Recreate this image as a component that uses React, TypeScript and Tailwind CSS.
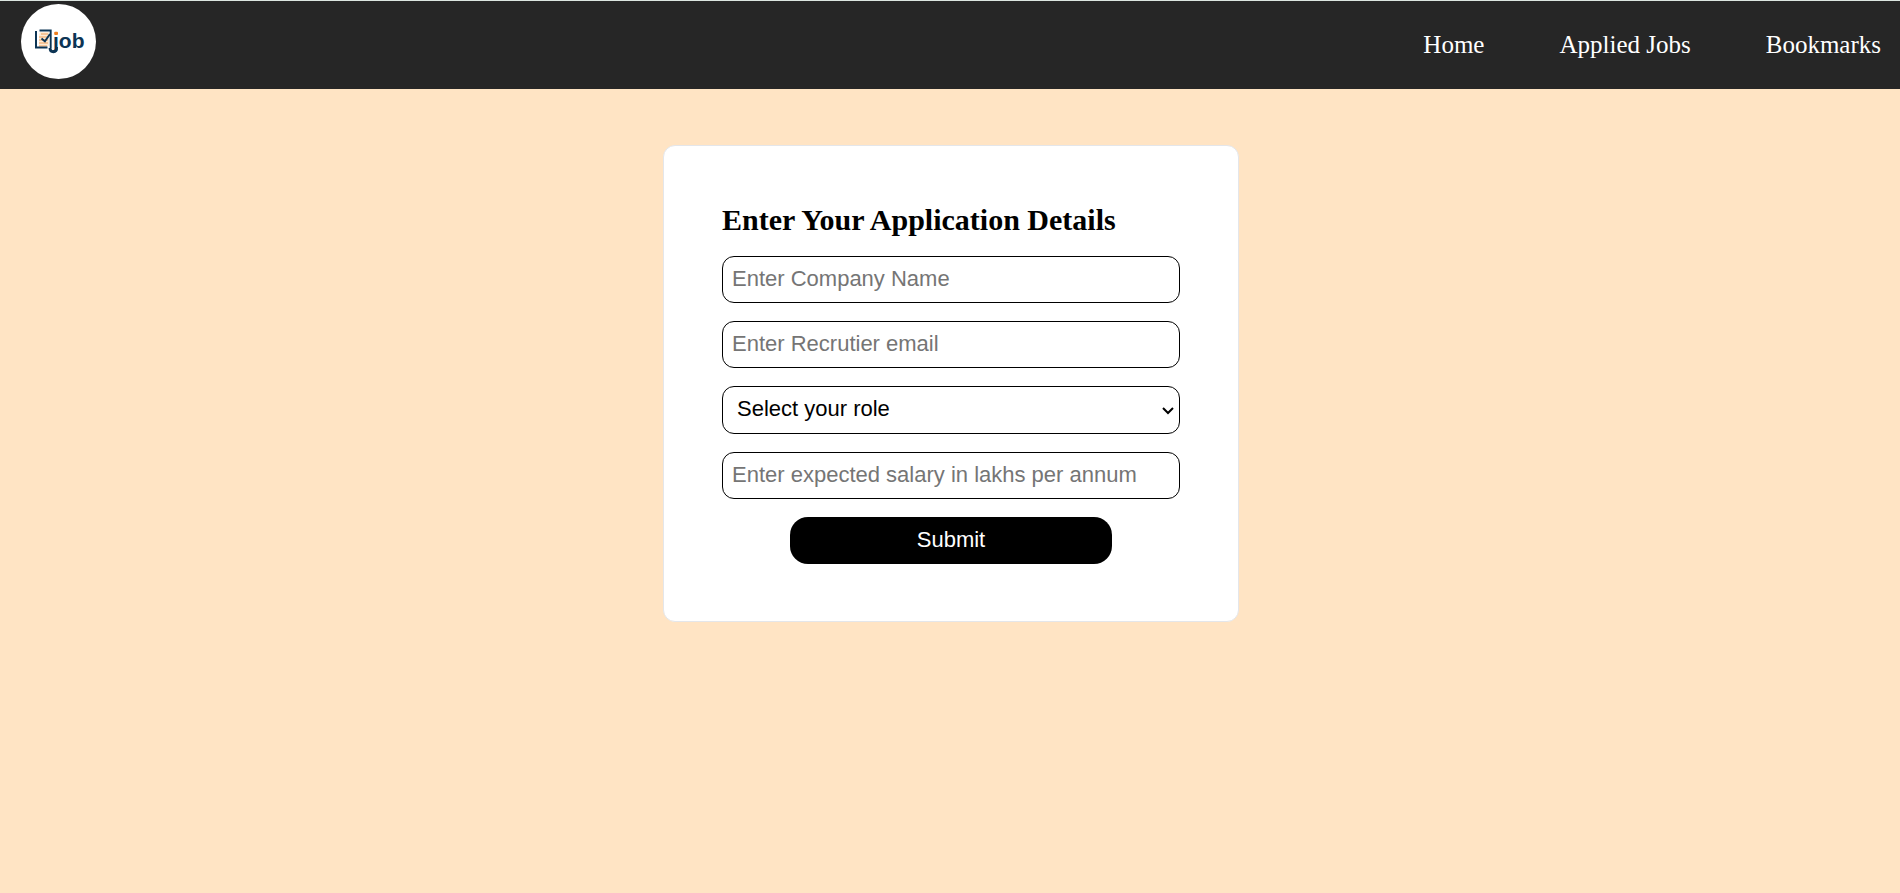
const links = ["Home", "Applied Jobs", "Bookmarks"];

const roles = ["Frontend Developer", "Backend Developer", "Full Stack Developer"];

const fieldClass =
  "block w-full rounded-xl border border-black bg-white font-['Liberation_Sans',Arial,sans-serif] text-[22px] leading-7 text-black placeholder:text-[#757575]";

function Logo() {
  return (
    <svg viewBox="0 0 75 75" className="size-[75px]" role="img" aria-label="job">
      <circle cx="37.5" cy="37.5" r="37.5" fill="#fff" />
      <path d="M19 28h9v14H18V31z" fill="#fdebd6" />
      <path
        d="M20 30h7M18 33h9M18 36h9M18 39h9M18 42h8"
        stroke="#f0a05a"
        strokeWidth="1"
      />
      <path d="M15 27v16.5h11.5" fill="none" stroke="#0c3454" strokeWidth="2" />
      <path d="M18.5 26.5h11.2v17.5" fill="none" stroke="#0c3454" strokeWidth="1.9" />
      <path d="M20.5 34.5l3.4 2.8 5.1-7.3" fill="none" stroke="#0c3454" strokeWidth="1.9" />
      <text
        x="32"
        y="44"
        fontFamily="'Liberation Sans', Arial, sans-serif"
        fontWeight="700"
        fontSize="21"
        fill="#0c3454"
      >
        job
      </text>
      <path d="M32.5 26.5h5v4.7h-5z" fill="#fff" />
      <path
        d="M29 44q0 3.8 3.4 3.8t3.2-4.8"
        fill="none"
        stroke="#0c3454"
        strokeWidth="2.8"
      />
      <rect x="33.2" y="27.8" width="3.8" height="3.2" rx="1" fill="#f07f1d" />
    </svg>
  );
}

export default function App() {
  return (
    <div className="min-h-screen bg-[#ffe4c4] font-['Liberation_Serif','Times_New_Roman',serif] text-black">
      <header className="flex h-[89px] items-center justify-between border-t border-[#dce5e0] bg-[#262626] pr-[19px] pl-[21px]">
        <a href="#home" className="mb-2">
          <Logo />
        </a>
        <nav className="flex gap-[75px] text-[25px] leading-7 text-white">
          {links.map((link) => (
            <a key={link} href="#">
              {link}
            </a>
          ))}
        </nav>
      </header>

      <main className="pt-14 pr-4 pl-[18px]">
        <form
          className="mx-auto flex w-full max-w-[576px] flex-col gap-[18px] rounded-xl border border-[#e4e6ea] bg-white px-[58px] py-[57px]"
          onSubmit={(event) => event.preventDefault()}
        >
          <h1 className="mb-px text-[30px] leading-[34px] font-bold">
            Enter Your Application Details
          </h1>
          <input
            type="text"
            aria-label="Company name"
            placeholder="Enter Company Name"
            className={`${fieldClass} h-[47px] px-[9px] pb-0.5`}
          />
          <input
            type="email"
            aria-label="Recruiter email"
            placeholder="Enter Recrutier email"
            className={`${fieldClass} h-[47px] px-[9px] pb-0.5`}
          />
          <div className="relative">
            <select
              aria-label="Role"
              defaultValue=""
              className={`${fieldClass} h-12 appearance-none pr-8 pb-0.5 pl-3.5`}
            >
              <option value="">Select your role</option>
              {roles.map((role) => (
                <option key={role}>{role}</option>
              ))}
            </select>
            <svg
              viewBox="0 0 12 8"
              className="pointer-events-none absolute top-[21px] right-1.5 h-2 w-3"
              aria-hidden="true"
            >
              <path d="M1 1l5 5 5-5" fill="none" stroke="#000" strokeWidth="2" />
            </svg>
          </div>
          <input
            type="text"
            aria-label="Expected salary"
            placeholder="Enter expected salary in lakhs per annum"
            className={`${fieldClass} h-[47px] px-[9px] pb-0.5`}
          />
          <button
            type="submit"
            className="h-[47px] w-full max-w-[322px] self-center rounded-[18px] bg-black pb-0.5 font-['Liberation_Sans',Arial,sans-serif] text-[22px] leading-7 text-white"
          >
            Submit
          </button>
        </form>
      </main>
    </div>
  );
}
